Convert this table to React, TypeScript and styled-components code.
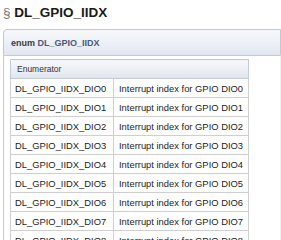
import { createGlobalStyle } from 'styled-components'
import styled from 'styled-components'

const GlobalStyle = createGlobalStyle`
  html, body {
    margin: 0;
    padding: 0;
    background: #fff;
  }
  body {
    font-family: "Liberation Sans", Arial, sans-serif;
  }
`

const enumerators = [0, 1, 2, 3, 4, 5, 6, 7, 8].map((n) => ({
  name: `DL_GPIO_IIDX_DIO${n}`,
  desc: `Interrupt index for GPIO DIO${n}`,
}))

function App() {
  return (
    <Page>
      <GlobalStyle />
      <Title>
        <Permalink>§</Permalink> DL_GPIO_IIDX
      </Title>

      <MemItem>
        <MemProto>
          <MemName>
            enum <NameLink>DL_GPIO_IIDX</NameLink>
          </MemName>
        </MemProto>

        <MemDoc>
          <FieldTable>
            <colgroup>
              <Col width={103} />
              <Col width={135} />
            </colgroup>
            <thead>
              <tr>
                <HeadCell colSpan={2}>Enumerator</HeadCell>
              </tr>
            </thead>
            <tbody>
              {enumerators.map((e) => (
                <tr key={e.name}>
                  <NameCell>{e.name}</NameCell>
                  <DescCell>{e.desc}</DescCell>
                </tr>
              ))}
            </tbody>
          </FieldTable>
        </MemDoc>
      </MemItem>
    </Page>
  )
}

const Page = styled.div`
  padding: 5px 0 0 3px;
  height: 240px;
  overflow: hidden;
  box-sizing: border-box;
`

const Title = styled.h2`
  margin: 0 0 8px 0;
  font-size: 13.5px;
  line-height: 16px;
  font-weight: bold;
  color: #1a1a1a;
  white-space: nowrap;
`

const Permalink = styled.span`
  font-weight: normal;
  color: #777;
`

const MemItem = styled.div`
  display: flex;
  flex-direction: column;
`

const MemProto = styled.div`
  height: 25px;
  display: flex;
  align-items: center;
  padding-left: 7px;
  border: 1px solid #c3c9d3;
  border-top-left-radius: 4px;
  background: linear-gradient(to bottom, #f6f8fb 0%, #eef1f7 45%, #e1e6ef 100%);
`

const MemName = styled.div`
  font-size: 9px;
  font-weight: bold;
  color: #3b3b3b;
  white-space: nowrap;
`

const NameLink = styled.span`
  color: #4a5a78;
`

const MemDoc = styled.div`
  border-left: 1px solid #c9ced6;
  border-right: 1px solid #eef0f3;
  padding: 3px 0 0 6px;
  background: #fff;
`

const FieldTable = styled.table`
  border-collapse: collapse;
  width: 238px;
  table-layout: fixed;
  font-size: 9.4px;
  color: #222;
`

const Col = styled.col<{ width: number }>`
  width: ${(p) => p.width}px;
`

const HeadCell = styled.th`
  height: 18px;
  padding: 0 0 0 6px;
  text-align: left;
  font-weight: normal;
  font-size: 8.5px;
  color: #333;
  border: 1px solid #c6cbd3;
  border-top-left-radius: 4px;
  background: linear-gradient(to bottom, #f7f8fb 0%, #eceff5 50%, #e0e5ee 100%);
`

const Cell = styled.td`
  height: 18px;
  padding: 0;
  white-space: nowrap;
  overflow: hidden;
  border: 1px solid #cfcfcf;
  vertical-align: middle;
`

const NameCell = styled(Cell)`
  padding-left: 4px;
`

const DescCell = styled(Cell)`
  padding-left: 5px;
`

export default App
